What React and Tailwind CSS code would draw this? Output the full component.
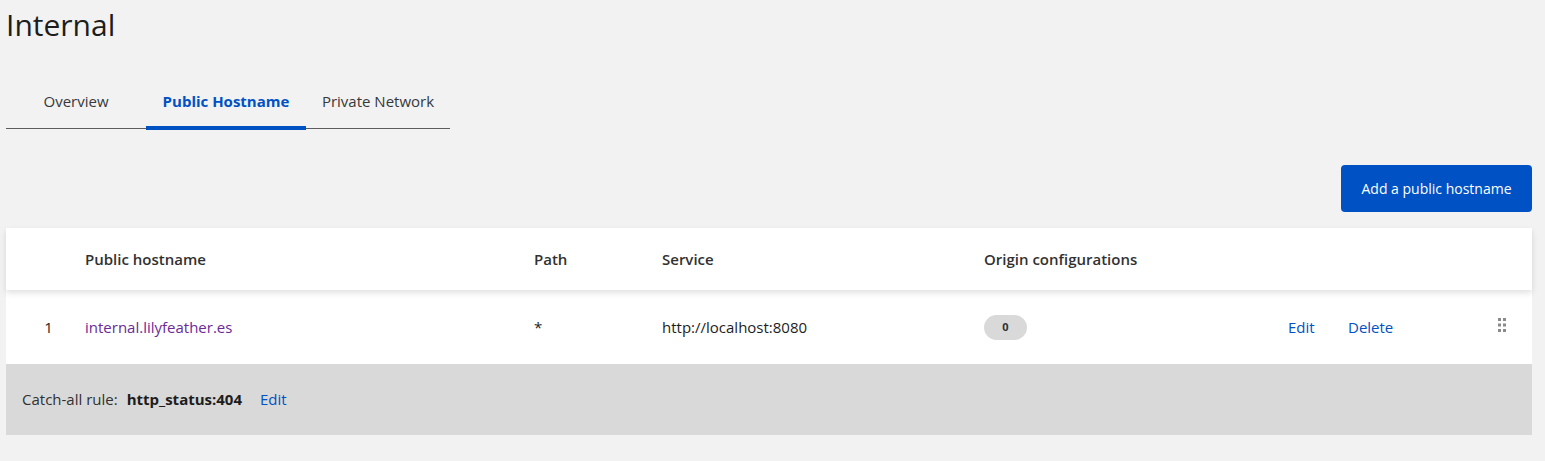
export default function App() {
  const font = { fontFamily: '"Open Sans", "Noto Sans", sans-serif' };
  return (
    <div className="min-h-screen bg-[#f2f2f2] text-[#1d1d1d] font-['Open_Sans','Noto_Sans',sans-serif]" style={font}>
      <div className="px-[6px] pt-[4px]">
        <h1 className="text-[30px] leading-[42px] text-[#1d1d1d]">Internal</h1>

        {/* Tabs */}
        <div className="mt-[37px] flex w-[444px] border-b border-[#5c5c5c] h-[46px]">
          <div className="w-[140px] flex items-center justify-center pb-[8px] text-[15px] text-[#36393a]">Overview</div>
          <div className="w-[160px] relative flex items-center justify-center pb-[8px] text-[15px] font-bold text-[#0051c3]">
            Public Hostname
            <span className="absolute left-0 right-0 bottom-[-2px] h-[4px] bg-[#0051c3]" />
          </div>
          <div className="w-[144px] flex items-center justify-center pb-[8px] text-[15px] text-[#36393a]">Private Network</div>
        </div>

        {/* Actions */}
        <div className="mt-[36px] flex justify-end pr-[7px]">
          <button className="h-[47px] w-[191px] rounded-[4px] bg-[#0051c3] text-white text-[14px]">
            Add a public hostname
          </button>
        </div>

        {/* Table */}
        <div className="mt-[16px] mr-[7px] bg-white">
          <div className="relative z-10 h-[62px] grid grid-cols-[79px_449px_128px_322px_304px_60px_1fr_35px] items-center text-[15px] font-semibold text-[#313131] shadow-[0_3px_6px_rgba(0,0,0,0.12)]">
            <div />
            <div>Public hostname</div>
            <div>Path</div>
            <div>Service</div>
            <div>Origin configurations</div>
            <div />
            <div />
            <div />
          </div>
          <div className="h-[74px] grid grid-cols-[79px_449px_128px_322px_304px_60px_1fr_35px] items-center text-[15px]">
            <div className="text-center pl-[6px] text-[#1d1d1d]">1</div>
            <div className="text-[#6b2a99]">internal.lilyfeather.es</div>
            <div>*</div>
            <div>http://localhost:8080</div>
            <div>
              <span className="inline-flex items-center justify-center w-[43px] h-[25px] rounded-full bg-[#d9d9d9] text-[11px] font-bold text-[#313131]">0</span>
            </div>
            <div className="text-[#0051c3]">Edit</div>
            <div className="text-[#0051c3]">Delete</div>
            <div className="pb-[4px]">
              <svg width="10" height="16" viewBox="0 0 10 16" className="fill-[#8a8a8a]">
                <rect x="1" y="1" width="3" height="3" />
                <rect x="6" y="1" width="3" height="3" />
                <rect x="1" y="6.5" width="3" height="3" />
                <rect x="6" y="6.5" width="3" height="3" />
                <rect x="1" y="12" width="3" height="3" />
                <rect x="6" y="12" width="3" height="3" />
              </svg>
            </div>
          </div>
          <div className="h-[71px] bg-[#d9d9d9] flex items-center pl-[16px] text-[15px]">
            <span className="text-[#313131]">Catch-all rule:</span>
            <span className="ml-[9px] font-bold text-[#1d1d1d]">http_status:404</span>
            <span className="ml-[18px] text-[#0051c3]">Edit</span>
          </div>
        </div>
      </div>
    </div>
  );
}
